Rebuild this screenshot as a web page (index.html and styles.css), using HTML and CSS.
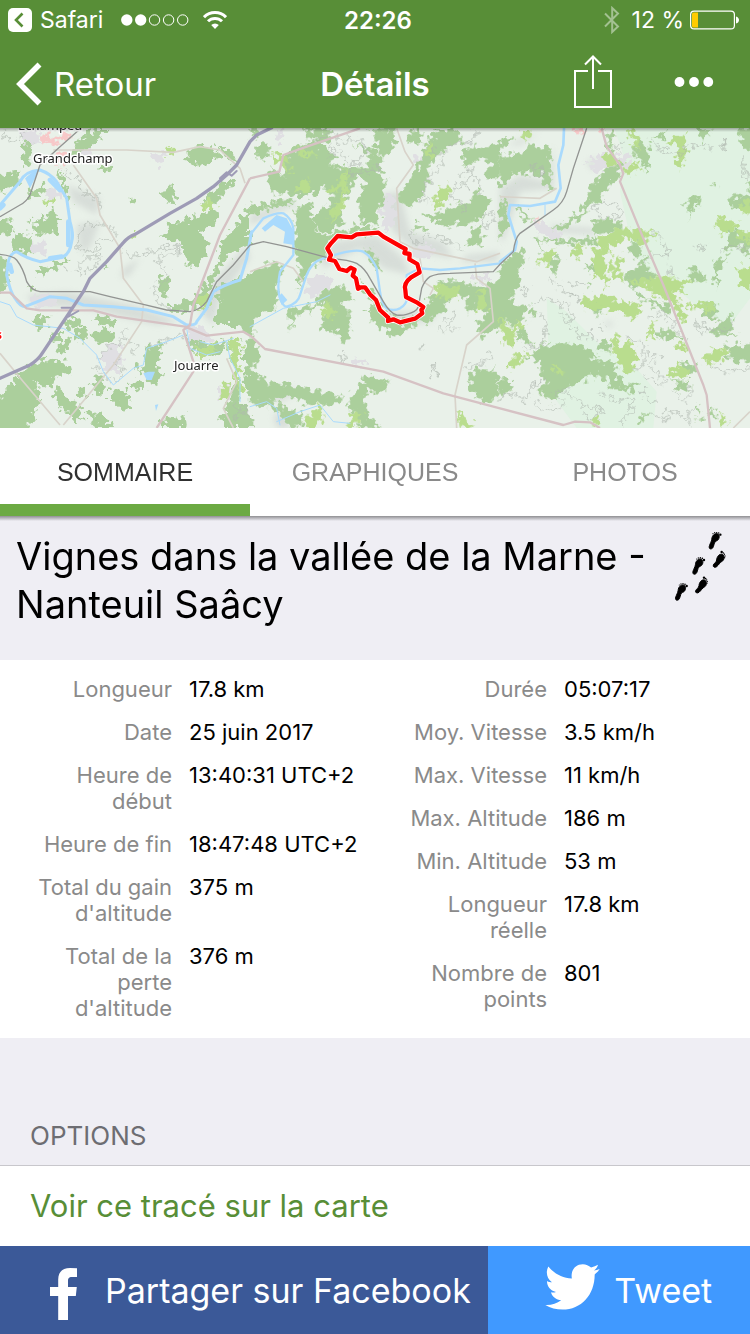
FILE: index.html
```html
<!DOCTYPE html>
<html lang="fr">
<head>
<meta charset="utf-8">
<meta name="viewport" content="width=device-width, initial-scale=1">
<title>Détails</title>
<link rel="stylesheet" href="styles.css">
</head>
<body>
<header class="top">
  <div class="status">
    <div class="status-left">
      <svg class="back-app" viewBox="0 0 24 24" aria-hidden="true"><rect width="24" height="24" rx="5" fill="#fff"/><path d="M14.500 5.500 8 12l6.500 6.500" fill="none" stroke="#588e37" stroke-width="2.600"/></svg>
      <span class="app-name">Safari</span>
      <svg class="signal" viewBox="0 0 68 12" aria-hidden="true"><g fill="#fff"><circle cx="5.800" cy="6" r="5.700"/><circle cx="19.700" cy="6" r="5.700"/></g><g fill="none" stroke="#fff"><circle cx="33.500" cy="6" r="5.200"/><circle cx="47.600" cy="6" r="5.200"/><circle cx="61.700" cy="6" r="5.200"/></g></svg>
      <svg class="wifi" viewBox="0 0 24 18" aria-hidden="true"><g fill="none" stroke="#fff" stroke-width="3"><path d="M1 6.200a15.500 15.500 0 0 1 22 0"/><path d="M5 10.300a9.900 9.900 0 0 1 14 0"/></g><path d="M12 18 8.200 14a5.400 5.400 0 0 1 7.600 0z" fill="#fff"/></svg>
    </div>
    <time class="clock">22:26</time>
    <div class="status-right">
      <svg class="bluetooth" viewBox="0 0 16 28" aria-hidden="true"><path d="M1 7.500 14 20.500 8.200 26V2L14 7.500 1 20.500" fill="none" stroke="#fff" stroke-opacity=".45" stroke-width="2"/></svg>
      <span>12 %</span>
      <svg class="battery" viewBox="0 0 50 20" aria-hidden="true"><rect x=".6" y="1.100" width="43.800" height="17.800" rx="3.500" fill="none" stroke="#fff" stroke-width="1.200"/><path d="M2 4a1.500 1.500 0 0 1 1.500-1.500H8v15H3.500A1.500 1.500 0 0 1 2 16z" fill="#fc0"/><path d="M46 6.500c4 1 4 6 0 7z" fill="#fff"/></svg>
    </div>
  </div>
  <nav class="nav">
    <button class="back" type="button">
      <svg viewBox="0 0 26 44" aria-hidden="true"><path d="M23.500 2.500 4 22l19.500 19.500" fill="none" stroke="#fff" stroke-width="5.600"/></svg>
      <span>Retour</span>
    </button>
    <h1 class="nav-title">Détails</h1>
    <div class="actions">
      <button class="share" type="button" aria-label="Partager"><svg viewBox="0 0 38 54" aria-hidden="true"><path d="M14 16H1v36h36V16H24M19 34V2M11 9.500 19 1.500l8 8" fill="none" stroke="#fff" stroke-width="2"/></svg></button>
      <button class="more" type="button" aria-label="Plus"><svg viewBox="0 0 40 10" aria-hidden="true"><g fill="#fff"><circle cx="5.500" cy="5" r="4.900"/><circle cx="20" cy="5" r="4.900"/><circle cx="34.300" cy="5" r="4.900"/></g></svg></button>
    </div>
  </nav>
</header>

<main>
<svg class="map" viewBox="0 9 2250 900" preserveAspectRatio="xMidYMid slice" role="img" aria-label="Carte du tracé">
  <defs>
    <filter id="soft" x="-20%" y="-20%" width="140%" height="140%"><feGaussianBlur stdDeviation="9"/></filter>
    <filter id="ragged" filterUnits="userSpaceOnUse" x="-40" y="-40" width="2330" height="1000" color-interpolation-filters="sRGB">
      <feTurbulence type="fractalNoise" baseFrequency=".055" numOctaves="2" seed="7"/>
      <feDisplacementMap in="SourceGraphic" scale="48" xChannelSelector="R" yChannelSelector="G"/>
    </filter>
    <linearGradient id="edge" x2="0" y2="1"><stop stop-color="#000" stop-opacity=".3"/><stop offset="1" stop-color="#000" stop-opacity="0"/></linearGradient>
  </defs>
  <rect y="0" width="2250" height="920" fill="#e9f1e9"/>
  <path fill="#e0f2e2" d="M1840 0H2250V520L2190 600 2110 560 2040 500 1960 470 1900 380 1860 200 1870 90ZM1640 520 1700 560 1800 660 1900 720 1970 800 1960 909H1730L1650 800Z"/>

  <!-- relief -->
  <g fill="#bfc3c2" opacity=".42" filter="url(#soft)">
    <path d="M200 180 300 220 290 270 220 230ZM230 300 300 290 270 370 240 380ZM370 430 420 400 390 450 360 460ZM80 510 200 500 400 540 540 590 470 600 250 550 100 540ZM600 560 640 470 740 360 750 400 660 520 640 600Z"/>
    <path d="M750 270 880 225 910 300 880 240 750 300ZM960 400 1000 350 1130 330 1210 400 1230 450 1150 430 1080 370 970 430ZM1140 210 1200 200 1230 320 1330 350 1360 400 1250 380 1180 320ZM1400 390 1500 380 1490 410 1380 410ZM1170 600 1290 590 1330 540 1280 560 1160 560Z"/>
    <path d="M1500 190 1560 150 1640 170 1660 60 1660 190 1560 200 1510 350 1500 340ZM1650 300 1780 310 1790 330 1660 320ZM1760 110 1790 100 1780 140ZM1810 590 1840 590 1830 610Z"/>
    <path d="M780 810 870 790 900 800 840 830ZM820 870 860 860 870 909 830 909ZM1520 60 1620 20 1560 60Z"/>
  </g>
  <g fill="#e0dfe3" filter="url(#ragged)">
    <path d="M60 20 110 10 120 60 60 50ZM450 85 490 80 500 110 475 120 455 105ZM230 60 275 65 270 95 235 85ZM60 360 130 350 140 395 100 380ZM80 520 150 500 180 540 110 550ZM300 690 350 650 370 690 360 740 320 740ZM560 600 600 600 640 650 570 650ZM650 790 690 770 700 820 660 820ZM130 200 170 180 190 220 150 220Z"/>
    <path d="M830 20 850 10 845 55 825 50ZM920 470 970 440 1000 480 950 510 920 500ZM1140 220 1180 210 1190 290 1150 320ZM1230 370 1290 355 1300 400 1240 400ZM1240 100 1270 90 1260 120 1240 120ZM1410 450 1470 450 1465 470 1410 465ZM1050 705 1100 700 1090 725 1055 725Z"/>
    <path d="M1760 110 1810 85 1900 90 1880 130 1790 140ZM1605 285 1690 330 1660 345 1610 320Z"/>
  </g>

  <g filter="url(#ragged)">
  <!-- woodland, west -->
  <g fill="#abcf9c">
    <path d="M65 55 100 50 95 80 85 120 70 130ZM-30 150 60 140 50 190 -30 205ZM75 205 130 175 140 200 85 225ZM240 40 290 12H330L300 40 250 75 200 100 220 70ZM560 95 590 60 650 70 660 95 600 125 565 110ZM655 75 690 70 720 120 680 100ZM490 200 510 178 533 210 518 240 505 228 490 225ZM180 130 195 170 215 240 200 250 190 190 175 160ZM85 290 120 285 125 265 155 270 155 255 170 265 172 300 165 330 140 322 110 335 105 305ZM-30 285 35 290 40 320 -30 345ZM40 325 95 330 95 385 35 380ZM100 440 205 400 180 430 120 452ZM-30 390 20 400 20 500 -30 505Z"/>
    <path d="M485 345 510 295 560 290 570 265 600 275 640 250 660 270 640 300 600 315 625 370 610 400 590 420 560 418 555 385 540 350 510 345ZM600 230 640 200 690 160 700 175 650 230ZM665 350 700 310 750 240V360L700 380 660 430 620 520 570 560 510 560 510 535 550 530 600 500 650 420ZM480 460 505 450 510 480 495 520 475 490ZM80 485 100 480 105 495ZM195 585 240 580 250 600 200 610ZM280 565 350 590 340 605 280 590ZM230 610 260 612 260 645 230 650ZM155 630 180 620 185 645 160 650ZM275 625 310 612 345 630 320 655 290 650ZM185 650 210 645 200 685 175 680ZM430 670 485 660 480 690 470 720 490 750 470 785 450 770 430 740 400 735 430 720Z"/>
    <path d="M-30 850 40 770 60 745 110 780 122 835 95 870 100 890 50 940H-30ZM40 750 130 705 200 710 210 740 160 770 130 790 100 770 70 760ZM160 795 185 785 200 820 230 830 250 880 230 890 200 860 175 850ZM230 800 255 790 260 812 240 820ZM285 750 315 760 310 800 290 805 275 780ZM330 790 380 795 390 840 370 855 330 830ZM390 770 425 770 430 800 390 785ZM260 860 310 870 340 909H290ZM480 890 550 870 555 909H480ZM640 570 670 530 640 520 660 480 760 445V640L700 600 650 600ZM550 640 600 700 660 690 680 650 710 750 690 830 660 870 680 909H760V880L720 830 710 700 670 640 640 660 600 650ZM730 650 760 640V835L735 780ZM100 580 140 575 145 600 110 610ZM300 110 330 125 340 135 325 140 300 130ZM385 220 400 222 400 232 388 232ZM310 425 320 420 322 430Z"/>
  </g>
  <!-- woodland, centre -->
  <g fill="#abcf9c" transform="translate(750 0)">
    <path d="M0 240 60 235 130 220 125 240 60 250 0 265ZM60 130 110 150 100 95 150 60 200 50 260 90 230 120 280 125 350 130 360 95 320 60 380 70 400 110 380 140 415 155 400 185 405 240 380 240 385 300 330 290 325 230 345 170 320 150 290 220 270 250 280 290 250 320 210 320 190 300 200 260 250 230 220 180 190 210 150 215 60 200ZM160 10 250 12 230 60 200 40 180 45ZM360 15 430 12 440 50 400 100 380 60ZM470 20 510 10 520 60 480 50ZM530 50 560 25 590 60 540 120 530 190 480 250 440 220 480 160 500 130ZM560 10 610 10 640 50 570 70ZM640 75 700 60 760 60 740 120 690 105 640 120ZM0 15 25 18 10 40ZM20 60 60 55 60 100 20 100ZM130 260 190 220 180 260 200 320 245 340 230 400 190 420 160 460 140 500 150 430 130 380 140 320ZM180 370 230 330 300 315 310 300 385 310 380 330 280 330 220 360 190 400ZM0 440 70 410 100 430 80 490 85 540 30 570 0 590ZM520 260 560 270 590 250 660 230 680 190 720 220 700 280 640 300 610 290 600 310 530 280ZM660 310 690 300 700 360 650 360ZM490 320 530 310 500 290ZM700 140 750 100V160H710Z"/>
    <path d="M190 520 240 490 280 480 310 520 270 540 300 560 300 600 295 655 275 650 270 620 220 620 210 590 240 560ZM120 550 200 540 260 510 250 530 140 570 120 615ZM320 465 370 500 400 560 450 590 520 570 520 540 570 500 560 470 640 470 650 480 700 480 760 460V600L700 640 680 610 710 560 690 540 650 560 640 510 600 520 580 560 530 590 480 600 440 640 400 610 360 590 370 570 340 550 380 550 350 510ZM340 380 360 370 400 440 380 440ZM0 640 20 650 30 700 10 720 30 760 50 770 120 780 150 790 280 810 270 840 180 840 130 815 80 820 40 850 0 830ZM300 820 350 745 370 760 420 765 400 800 350 800 340 830 350 870 395 909H330L320 860 290 850ZM20 830 80 830 120 860 160 860 150 909H110L100 870 60 850ZM655 760 680 730 740 735 750 800 720 830 690 830 665 800Z"/>
  </g>
  <!-- woodland, east -->
  <g fill="#abcf9c" transform="translate(1500 0)">
    <path d="M0 95 70 85 90 55 110 70 155 60 150 110 155 180 140 190 125 150 80 140 40 155 0 190ZM0 220 15 230 25 290 0 350ZM45 245 70 250 100 290 80 290ZM320 20 345 20 330 60 350 70 320 75ZM400 80 410 45 450 60 440 150 420 100ZM455 40 510 10 480 40ZM535 65 560 60 555 90 540 85ZM600 10 640 12 615 40 605 70ZM0 40 40 40 20 60 0 60ZM715 12 790 10V110L725 60ZM740 165 780 165V195H740ZM260 220 275 180 330 120 360 125 360 155 320 190 300 230 270 235 240 280 190 315 150 310 200 290 240 260ZM265 300 300 280 370 290 360 310 290 330ZM545 235 570 210 605 220 600 240 585 230 570 285 570 240ZM690 215 780 210 740 250 700 250ZM630 180 650 172 655 185ZM105 335 120 345 280 335 310 355 200 358 120 350 130 400ZM0 420 60 370 75 400 50 450 60 480 30 530 75 540 70 590 30 600 0 570ZM385 350 425 350 420 400 395 395ZM370 450 420 420 445 380 440 430 470 450 470 460 390 490ZM155 395 180 400 165 460 145 430ZM400 490 440 520 420 530ZM440 520 510 540 500 570 460 540ZM560 440 600 430 620 470 580 470 560 455ZM640 410 680 390 670 420 655 440 655 500 645 460ZM600 530 650 540 650 590 620 580 600 550ZM630 620 700 560 690 620 720 630 640 630ZM90 545 110 560 105 575 85 570ZM50 600 75 620 105 665 60 650ZM460 615 530 620 560 680 540 640 480 640ZM80 700 130 660 185 655 250 660 295 690 270 700 360 720 340 740 370 780 405 770 400 800 330 790 310 750 250 760 190 795 160 835 110 800 140 770 120 740 125 705ZM300 650 330 650 330 680 300 680ZM0 760 40 770 20 810 0 815ZM675 660 790 655V705L690 710ZM540 710 590 720 580 750 550 740ZM515 760 570 770 570 795 530 795ZM630 850 650 860 640 880 625 875ZM590 840 600 840 600 860 590 860ZM415 880 455 860 440 880 420 895ZM590 870 610 880 600 890ZM255 470 270 480 260 495ZM250 420 300 420 290 450ZM260 545 300 535 320 550 290 570ZM690 310 750 330V400L720 360 680 380Z"/>
  </g>

  <!-- scrub and vineyards -->
  <g fill="#b9dd8e">
    <path d="M505 65 515 57 526 70 520 92 505 90ZM605 245 625 220 648 225 640 250 620 258ZM133 225 165 212 160 230 135 237ZM395 333 410 330 408 340 397 342ZM580 530 630 500 635 520 620 555ZM575 655 610 670 650 655 640 690 600 700ZM685 640 710 645 725 660 715 760 735 800 720 815 705 760 692 700ZM665 770 690 770 685 815 668 820Z"/>
    <path transform="translate(750 0)" d="M65 85 90 90 120 120 125 150 90 120ZM145 70 165 65 170 85 205 85 175 100 145 90ZM135 190 160 165 175 150 180 205 140 200ZM225 200 270 170 290 125 290 200 280 245 250 290 240 310 245 240 270 230 280 190 230 210ZM530 60 550 50 545 110 530 90ZM545 240 570 190 595 175 600 210 560 255ZM215 560 230 525 255 560 240 590ZM550 480 630 490 625 515 590 520 560 505ZM690 500 710 485 705 560 680 555ZM160 890 210 840 220 870 200 909H170ZM300 860 330 860 320 909H300ZM620 850 640 880 665 900 660 909H630Z"/>
    <path transform="translate(1500 0)" d="M60 40 70 12 95 15 80 45ZM310 85 330 75 355 105 350 125 310 105ZM385 20 400 10 425 45 410 75ZM370 130 410 110 425 130 380 150ZM500 55 525 30 555 30 560 60 545 140 525 100 540 70ZM645 305 660 270 680 285 715 290 710 310 660 330ZM720 230 780 230V280L725 260ZM705 325 740 320 780 350 720 345ZM290 345 350 310 440 315 465 330 430 355 380 340 320 370 340 390 310 390ZM215 365 250 360 250 390 220 400ZM275 380 305 365 320 430 320 490 300 460 275 460 290 440ZM100 440 120 400 150 370 170 385 150 410 110 420ZM335 410 370 385 375 400 355 430 370 470 335 460ZM380 465 460 460 500 450 560 470 590 465 540 490 560 510 520 500 560 580 540 590 525 540 470 510 420 480ZM250 520 330 510 350 535 380 530 390 540 410 530 425 560 400 580 350 555 250 550ZM560 540 600 530 650 545 630 560 590 550ZM0 560 30 610 50 590 80 600 45 620 45 655 15 660 0 600ZM335 680 345 620 360 660 395 650 410 690 400 745 370 740 350 700ZM25 740 40 690 60 685 90 690 60 710 40 735ZM150 718 175 720 200 760 170 745ZM440 630 460 590 465 620 455 645ZM530 650 560 655 555 685 530 670ZM505 750 530 700 540 730 570 740 560 760 530 750ZM610 700 640 670 680 670 670 700 630 720ZM715 430 780 420V500L720 480ZM655 890 665 865 680 890 665 909ZM275 885 300 880 300 905 285 905Z"/>
  </g>
  <g fill="#f7c8c8"><path d="M120 30 145 15 150 45 125 55ZM140 50 200 25 220 35 160 60ZM165 80 190 75 200 115 170 125ZM1720 10H1765L1750 22 1725 25ZM1785 10H1815L1800 25ZM1605 285 1620 272 1628 285 1610 292Z"/></g>

  <!-- contour lines -->
  <g fill="none" stroke="#b0b8b0" stroke-width="3">
    <path d="M10 10 20 40 60 45 70 20M190 130 200 150 235 165 250 210 295 210 300 250M245 300 300 295 340 310 350 320 330 345 300 340 290 375 240 380 235 350ZM195 430 205 430 200 442ZM225 430 260 400 300 395 280 430 250 440 225 440M370 380 400 392 440 385 490 365 540 365 540 380 480 395 470 410 510 450 460 490 470 530 510 550M290 700 330 665 370 650 370 610M280 720 340 770 370 750 350 700M380 640 410 660 400 690M440 665 520 640 550 630M700 840 750 860M700 890 720 860 750 870"/>
    <path d="M940 50 1000 20 1020 50 1080 40 1100 90 1060 110 1040 150 1140 130M990 60 1010 80 990 90M1020 80 1040 110 1080 120M1300 60 1310 100 1350 60 1420 50 1430 10M1340 90 1290 160 1260 230 1290 220M1380 150 1420 130 1400 190 1370 180 1350 220 1400 240 1390 270M1400 120 1410 150 1440 170 1450 210M1230 320 1240 360 1280 330 1360 350 1390 380M1440 280 1470 260 1485 290 1450 310ZM1330 590 1370 560 1350 600M1320 620 1350 600 1370 620M1265 660 1270 670 1260 670ZM1300 715 1310 740 1295 740ZM1395 730 1430 720 1480 690M1018 690 1035 690 1028 705 1018 700ZM1285 760 1300 745 1290 765Z"/>
    <path d="M1590 120 1620 130 1630 150 1610 150ZM1870 50 1850 80M1950 40 1980 70 2040 90 2060 60 2130 70M2160 70 2175 50 2175 75ZM1780 240 1850 235 1860 270 1820 280 1780 260ZM1960 320 1990 350 2010 390 1960 390 1940 410M2000 420 2030 450 2000 440M2085 365 2115 365 2110 382ZM2225 100 2240 160M2160 380 2200 360 2250 380M1570 480 1585 490 1575 510 1568 495ZM1600 540 1640 520 1700 540 1720 580 1700 590 1680 560M1620 560 1640 600 1630 660 1580 670M1670 480 1700 500 1740 520 1710 500M1700 470 1750 480M1700 590 1740 630 1780 630 1770 650M1650 460 1660 480M1800 600 1815 600 1812 608ZM1940 580 1990 560 2020 600 2060 650M2090 590 2120 610 2100 630ZM2110 610 2180 620 2200 590M1880 640 1930 650 1930 720 1900 740M1940 690 1980 690 1950 720M1950 730 2000 760 1980 780 1930 750M1500 820 1540 800 1580 830 1600 780 1640 760M1600 830 1640 860 1700 840 1660 800 1710 790M1700 800 1750 840 1800 850 1790 880 1750 870M1800 800 1850 830 1890 820 1900 850 1860 890 1870 909M1920 800 1935 790 1930 815ZM1950 860 2000 890 1990 850 2050 870M2010 790 2050 830 2080 800 2060 770M2130 720 2180 740 2250 730M2080 850 2060 880 2080 900M1940 820 1970 830"/>
  </g>
  </g>

  <!-- minor roads -->
  <g fill="none" stroke="#d8d3ca" stroke-width="5" stroke-linejoin="round">
    <path d="M160 75H380L520 82 600 65 660 75 720 130 735 175M220 120 290 220 300 270 360 370 370 460 430 540 425 590 340 720 190 900M0 685 70 770 180 900M700 909 670 850 710 770 680 700"/>
    <path d="M1190 10 1215 80 1240 120 1190 190 1200 350 1240 370 1430 410 1500 385M750 440 830 410 880 430 910 470M1425 415 1430 460 1470 490 1480 590 1400 660 1365 810 1370 909M1260 400 1270 470 1300 490 1290 510M2200 909 2250 860M1500 215 1620 220 1670 190"/>
  </g>
  <!-- rivers -->
  <g fill="none" stroke="#a9dafd" stroke-linecap="round" stroke-linejoin="round">
    <path stroke-width="9" d="M0 240 60 170Q75 138 120 135 150 145 170 170L200 220 210 290Q222 330 215 350 210 385 190 395L120 410Q80 400 50 380 30 385 25 410L20 450Q30 500 45 520 60 545 75 545L150 515 200 520 250 540 340 545 440 555 520 575 560 600Q590 600 590 590L620 550 640 500Q670 480 720 465L740 400 755 320"/>
    <path stroke-width="7" d="M750 330 790 280Q830 262 850 265 875 280 880 310L880 390 840 440Q830 490 840 520 850 545 860 545 895 535 900 510L920 450Q935 410 970 400L1020 385Q1070 372 1090 380 1115 395 1130 430L1140 500Q1145 540 1160 550 1180 560 1200 550 1225 535 1220 510L1220 450 1260 430 1320 435 1380 430 1500 415"/>
    <path stroke-width="8" d="M1500 410 1545 375 1550 350 1525 270 1530 240 1590 243 1665 230 1682 190 1675 120 1690 60 1692 10"/>
    <path stroke-width="14" d="M85 160 105 145M150 165 180 195M205 290 205 360M185 395 150 400M0 250 10 240M30 420 35 440"/>
    <path stroke-width="3" d="M0 530 30 540 50 575 100 600 190 610 240 640 290 690 310 740 340 780 400 730 430 720 440 670 500 650 550 630M560 610 570 670 620 690 660 680M600 650 640 660 700 640M680 650 690 700 720 760 720 830M750 845 800 830 830 850 840 900M830 890 900 860 960 840 1000 890 1050 895M750 605 850 550 950 530 990 510M1635 240 1635 270"/>
  </g>
  <g fill="#a9dafd"><path d="M785 310 830 270 860 280 882 320 882 360 850 355 855 320 820 300 795 320ZM835 515 845 505 862 525 845 540ZM430 745 445 740 465 740 455 765 440 765ZM465 840 475 838 468 858ZM75 160 110 150 90 190Z"/></g>

  <!-- railway -->
  <path fill="none" stroke="#929492" stroke-width="4" d="M240 12 175 70 120 120 90 210Q80 230 60 240L0 275M0 388Q40 392 50 405 70 430 80 470 95 498 120 500H270L330 515 430 538 500 555 570 560Q600 555 620 530L650 470 700 420 750 360 790 350 860 365 990 400Q1050 405 1070 415 1095 430 1110 460L1150 530Q1170 565 1190 570 1205 572 1220 568 1250 560 1255 545L1265 490Q1275 465 1290 455 1310 445 1350 445L1480 440 1500 418 1540 380Q1545 340 1560 325L1660 255Q1690 235 1700 200L1720 130 1760 10"/>
  <!-- primary roads -->
  <g fill="none" stroke="#d6c2c4" stroke-width="7" stroke-linejoin="round">
    <path d="M0 503H30L80 550 120 556H280L350 575 555 605 620 632 730 620 755 635 795 672 1150 740 1330 805 1500 850 1690 900 1725 890 1770 892 1800 909M750 160 660 330 580 540 570 600 550 615 580 710 580 740 470 909M1080 10 920 65 850 90 838 140 750 160"/>
    <path d="M1805 10 1820 65 1860 120 1870 145 1860 170 1930 340 1990 480 2110 780 2120 810 2130 909"/>
  </g>
  <!-- motorway -->
  <g fill="none" stroke="#9e9bb6" stroke-linecap="round" stroke-linejoin="round">
    <path stroke-width="10" d="M0 760 90 720Q115 705 130 680L190 590 250 500 270 460 320 410 370 353Q385 335 405 328L510 265 590 220 640 185 680 150 710 120 750 50 770 30 815 8"/>
    <path stroke-width="6" d="M185 548H215L205 575 235 558M660 160 680 142 695 152 710 138"/>
  </g>

  <!-- recorded track -->
  <g fill="none" stroke-linejoin="round" stroke-linecap="round">
    <path stroke="#fff" stroke-width="18" d="M987 404 993 390 982 370 993 355 1013 333 1055 337 1070 328 1135 323 1150 335 1205 366 1217 372 1213 384 1229 387 1228 403 1252 417 1259 442 1232 458Q1210 475 1216 495L1218 516 1250 532 1270 546 1264 555 1267 565 1245 581 1200 592 1180 583 1164 588 1165 578 1140 555 1128 525 1110 508 1095 487 1083 487 1074 491 1068 460 1058 452 1064 434 1052 428 1040 438 1018 432 1005 408Z"/>
    <path stroke="#f00" stroke-width="13" d="M987 404 993 390 982 370 993 355 1013 333 1055 337 1070 328 1135 323 1150 335 1205 366 1217 372 1213 384 1229 387 1228 403 1252 417 1259 442 1232 458Q1210 475 1216 495L1218 516 1250 532 1270 546 1264 555 1267 565 1245 581 1200 592 1180 583 1164 588 1165 578 1140 555 1128 525 1110 508 1095 487 1083 487 1074 491 1068 460 1058 452 1064 434 1052 428 1040 438 1018 432 1005 408Z"/>
  </g>

  <g class="places">
    <text x="54" y="14">Echampeu</text>
    <text x="99" y="113">Grandchamp</text>
    <text x="522" y="735">Jouarre</text>
    <text class="place-red" x="6" y="642">s</text>
  </g>
  <rect y="9" width="2250" height="12" fill="url(#edge)"/>
</svg>

<div class="tabs" role="tablist">
  <button class="tab tab-active" type="button" role="tab" aria-selected="true">SOMMAIRE</button>
  <button class="tab" type="button" role="tab" aria-selected="false">GRAPHIQUES</button>
  <button class="tab" type="button" role="tab" aria-selected="false">PHOTOS</button>
</div>

<section class="heading">
  <h2>Vignes dans la vallée de la Marne - Nanteuil Saâcy</h2>
  <svg class="steps" viewBox="96 81 168 216" role="img" aria-label="Randonnée à pied">
    <defs>
      <g id="foot" stroke="#000" stroke-width="3" stroke-linejoin="round">
        <path d="M18-13C24-6 19 5 12 7 6 9 6 16 3 24 1 31-7 33-9 28-11 24-7 17-5 12-1 5-2-2 0-6 4-14 13-18 18-13Z" transform="translate(-1 3)"/>
        <g stroke="none"><circle cx="23" cy="-9" r="3.600"/><circle cx="18" cy="-14" r="2.400"/><circle cx="12" cy="-16" r="2.200"/><circle cx="6" cy="-15" r="2"/><circle cx="1" cy="-12" r="1.800"/></g>
      </g>
      <g id="foot-right" stroke="#000" stroke-width="3" stroke-linejoin="round">
        <path d="M16-15C24-11 22 3 15 6 9 9 5 17-1 22-7 26-13 23-11 17-9 12-2 9-1 2-1-6 6-18 16-15Z" transform="translate(-1 3)"/>
        <g stroke="none"><circle cx="13" cy="-19" r="3.600"/><circle cx="18" cy="-16" r="2.400"/><circle cx="21" cy="-12" r="2.200"/><circle cx="23" cy="-7" r="2"/><circle cx="22" cy="-2" r="1.800"/></g>
      </g>
    </defs>
    <use href="#foot" x="218" y="98"/><use href="#foot" x="169" y="174"/><use href="#foot" x="117" y="252"/>
    <use href="#foot-right" x="232" y="160"/><use href="#foot-right" x="179" y="237"/>
  </svg>
</section>

<section class="stats">
  <dl>
    <dt>Longueur</dt><dd>17.8 km</dd>
    <dt>Date</dt><dd>25 juin 2017</dd>
    <dt>Heure de début</dt><dd>13:40:31 UTC+2</dd>
    <dt>Heure de fin</dt><dd>18:47:48 UTC+2</dd>
    <dt>Total du gain d'altitude</dt><dd>375 m</dd>
    <dt>Total de la perte d'altitude</dt><dd>376 m</dd>
  </dl>
  <dl>
    <dt>Durée</dt><dd>05:07:17</dd>
    <dt>Moy. Vitesse</dt><dd>3.5 km/h</dd>
    <dt>Max. Vitesse</dt><dd>11 km/h</dd>
    <dt>Max. Altitude</dt><dd>186 m</dd>
    <dt>Min. Altitude</dt><dd>53 m</dd>
    <dt>Longueur réelle</dt><dd>17.8 km</dd>
    <dt>Nombre de points</dt><dd>801</dd>
  </dl>
</section>

<section class="options">
  <h3>OPTIONS</h3>
  <a class="option" href="#carte">Voir ce tracé sur la carte</a>
</section>
</main>

<footer class="social">
  <button class="facebook" type="button">
    <svg viewBox="0 0 27 52" aria-hidden="true"><path d="M27 .3V9h-5c-3.500 0-4 1.700-4 4v6h8.800l-1 9H18v24H8.200V28H0v-9h8.200v-7.500C8.200 4 12.500 0 20 0z" fill="#fff"/></svg>
    <span>Partager sur Facebook</span>
  </button>
  <button class="tweet" type="button">
    <svg viewBox="512 463 166 138" aria-hidden="true"><path d="M522 470c18 22 42 35 71 36-4-24 10-43 33-43 10 0 18 4 25 10 8-2 15-5 21-8-2 8-6 13-12 17 6 0 11-2 17-4-4 7-9 11-15 16 0 62-41 106-97 106-19 0-37-5-52-14 18 1 34-4 48-14-15-1-27-10-31-24 5 1 10 1 15-1-17-4-27-17-27-33 5 3 10 4 15 4-15-11-20-30-11-48z" fill="#fff"/></svg>
    <span>Tweet</span>
  </button>
</footer>
</body>
</html>
```
FILE: styles.css
```css
* {
  box-sizing: border-box;
}

body {
  margin: 0;
  min-height: 100vh;
  display: flex;
  flex-direction: column;
  background: #fff;
  color: #000;
  font-family: Inter, "Liberation Sans", sans-serif;
}

main {
  flex: 1;
}

button {
  margin: 0;
  padding: 0;
  border: 0;
  background: none;
  color: inherit;
  font: inherit;
}

svg {
  display: block;
  flex: none;
}

h1, h2, h3, dl, dd {
  margin: 0;
  font-weight: 400;
}

.top {
  background: #588e37;
  color: #fff;
}

.status {
  height: 40px;
  padding: 0 10px 0 8px;
  display: grid;
  grid-template-columns: 1fr auto 1fr;
  align-items: center;
  font-size: 23px;
}

.status-left,
.status-right {
  display: flex;
  align-items: center;
}

.status-right {
  justify-content: flex-end;
  gap: 6px;
}

.back-app { width: 24px; height: 24px; }
.app-name { margin: 0 18px 0 8px; }
.signal { width: 68px; height: 12px; }
.wifi { width: 24px; height: 18px; margin-left: 14px; }
.clock { padding-left: 8px; font-size: 24px; font-weight: 600; }
.bluetooth { width: 16px; height: 28px; margin-right: 6px; }
.battery { width: 50px; height: 20px; }

.nav {
  height: 88px;
  padding: 0 36px 0 16px;
  display: grid;
  grid-template-columns: 1fr auto 1fr;
  align-items: center;
  font-size: 33px;
}

.back {
  display: flex;
  align-items: center;
  gap: 12px;
}

.back svg { width: 26px; height: 44px; }

.nav-title {
  padding-left: 20px;
  font-size: 33px;
  font-weight: 600;
}

.actions {
  margin-bottom: 4px;
  display: flex;
  justify-content: flex-end;
  align-items: center;
  gap: 62px;
}

.share svg { width: 38px; height: 54px; }
.more svg { width: 40px; height: 10px; }

.map {
  width: 100%;
  height: 300px;
}

.places {
  font-family: "Noto Sans", "Open Sans", sans-serif;
  font-size: 39px;
  fill: #222;
  stroke: #fff;
  stroke-width: 9px;
  stroke-linejoin: round;
  paint-order: stroke;
}

.place-red {
  fill: #f00;
  font-weight: 700;
  text-anchor: end;
}

.tabs {
  display: grid;
  grid-template-columns: repeat(3, 1fr);
  height: 88px;
  background: #fff;
}

.tab {
  border-top: 12px solid transparent;
  border-bottom: 12px solid transparent;
  color: #8a8a8a;
  font-family: "Liberation Sans", Arial, sans-serif;
  font-size: 25px;
}

.tab-active {
  border-bottom-color: #6caa43;
  color: #303030;
}

.heading {
  min-height: 144px;
  padding: 16px 22px 16px 16px;
  display: flex;
  justify-content: space-between;
  background: #efeef4 linear-gradient(rgba(0, 0, 0, .4), rgba(0, 0, 0, 0)) no-repeat top / 100% 5px;
}

.heading h2 {
  max-width: 640px;
  font-size: 38px;
  line-height: 48px;
}

.steps { width: 56px; height: 72px; }

.stats {
  padding: 16px 0 17px;
  display: grid;
  grid-template-columns: 1fr 1fr;
  align-items: start;
  font-size: 22px;
  line-height: 26px;
}

.stats dl {
  padding-left: 30px;
  display: grid;
  grid-template-columns: 142px 1fr;
  gap: 17px;
}

.stats dt {
  color: #8a8a8a;
  text-align: right;
}

.options h3 {
  padding: 82px 30px 13px;
  border-bottom: 1px solid #c8c7cc;
  background: #efeef4;
  color: #6d6d72;
  font-size: 26px;
  line-height: 32px;
}

.option {
  display: block;
  padding: 20px 30px;
  color: #588e37;
  font-size: 31px;
  line-height: 40px;
  text-decoration: none;
}

.social {
  display: grid;
  grid-template-columns: 65fr 35fr;
  height: 88px;
  color: #fff;
  font-size: 34px;
}

.social button {
  display: flex;
  align-items: center;
}

.facebook {
  padding: 0 0 0 50px;
  gap: 28px;
  background: #3b5998;
}

.facebook svg { width: 27px; height: 52px; margin-top: 8px; }

.social .tweet {
  justify-content: center;
  gap: 14px;
  padding-left: 20px;
  background: #4099ff;
}

.tweet svg { width: 55px; height: 46px; margin-bottom: 6px; }
```
